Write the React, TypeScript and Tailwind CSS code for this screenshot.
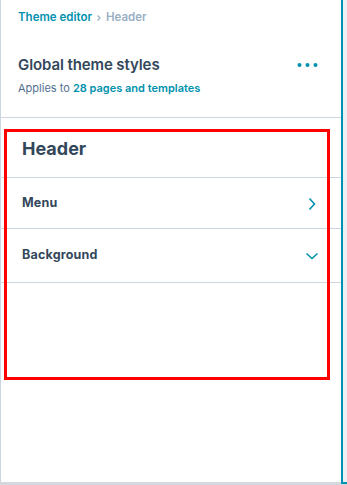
import React from "react";

export default function App() {
  const font = { fontFamily: "Inter, 'Noto Sans', sans-serif" };
  return (
    <div className="relative flex w-[347px] h-[485px] bg-white text-[#33475b]" style={font}>
      <div className="flex flex-col w-[341px] h-[485px]">
        <div className="flex-1 flex flex-col border-l border-[#cbd6e2]">
          <div className="flex items-center h-[34px] pl-[17px] pt-[1px] text-[11.5px] font-semibold">
            <span className="text-[#0091ae]">Theme editor</span>
            <svg width="14" height="10" viewBox="0 0 14 10">
              <path d="M5.5 2.5 L8 5 L5.5 7.5" fill="none" stroke="#99afc4" strokeWidth="1.2" />
            </svg>
            <span className="text-[#99afc4]">Header</span>
          </div>
          <div className="flex flex-col pl-[17px] pr-[22px] pt-[19px] h-[84px] border-b border-[#cbd6e2]">
            <div className="flex items-center justify-between h-[24px]">
              <span className="text-[15px] font-semibold tracking-[-0.1px]">Global theme styles</span>
              <svg width="22" height="6" viewBox="0 0 22 6">
                <circle cx="2.5" cy="3" r="2" fill="#0091ae" />
                <circle cx="10.5" cy="3" r="2" fill="#0091ae" />
                <circle cx="18.5" cy="3" r="2" fill="#0091ae" />
              </svg>
            </div>
            <div className="mt-[1px] text-[11px] leading-[20px]">
              <span className="text-[#516f90]">Applies to </span>
              <span className="text-[#0091ae] font-semibold">28 pages and templates</span>
            </div>
          </div>
          <div className="flex items-center h-[60px] pl-[21px] pt-[1px] border-b border-[#cbd6e2]">
            <span className="text-[18px] font-bold">Header</span>
          </div>
          <div className="flex items-center justify-between h-[51px] pl-[21px] pr-[24px] pt-[1px] border-b border-[#cbd6e2]">
            <span className="text-[12.5px] font-bold tracking-[0.2px]">Menu</span>
            <svg width="10" height="14" viewBox="0 0 10 14">
              <path d="M2.5 1.5 L7.5 7 L2.5 12.5" fill="none" stroke="#0091ae" strokeWidth="1.6" />
            </svg>
          </div>
          <div className="flex items-center justify-between h-[54px] pl-[21px] pr-[22px] border-b border-[#cbd6e2]">
            <span className="text-[12.5px] font-bold tracking-[0.2px]">Background</span>
            <svg width="14" height="10" viewBox="0 0 14 10">
              <path d="M1.5 2.5 L7 7.5 L12.5 2.5" fill="none" stroke="#0091ae" strokeWidth="1.6" />
            </svg>
          </div>
          <div className="flex-1" />
        </div>
        <div className="h-[3px] bg-[#d3d9df]" />
      </div>
      <div className="flex flex-col w-[6px] h-[485px]">
        <div className="h-[484px] border-l-2 border-b-2 border-[#0091ae] bg-[#eaf0f6]" />
        <div className="flex-1 bg-[#d3d9df]" />
      </div>
      <div className="absolute left-[4px] top-[129px] w-[326px] h-[251px] border-[3px] border-[#ff0000] pointer-events-none" />
    </div>
  );
}
